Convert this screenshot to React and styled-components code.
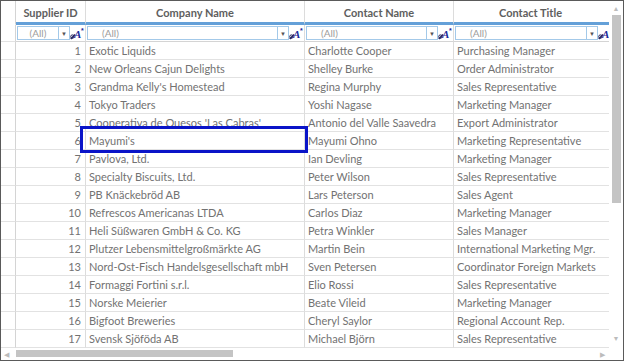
import React from 'react';
import styled, { createGlobalStyle } from 'styled-components';

const GlobalStyle = createGlobalStyle`
  body {
    margin: 0;
    background: #fff;
    font-family: Lato, "Open Sans", sans-serif;
  }
`;

const COLS = '15px 70px 219px 149px 160px';

const rows = [
  [1, 'Exotic Liquids', 'Charlotte Cooper', 'Purchasing Manager'],
  [2, 'New Orleans Cajun Delights', 'Shelley Burke', 'Order Administrator'],
  [3, "Grandma Kelly's Homestead", 'Regina Murphy', 'Sales Representative'],
  [4, 'Tokyo Traders', 'Yoshi Nagase', 'Marketing Manager'],
  [5, "Cooperativa de Quesos 'Las Cabras'", 'Antonio del Valle Saavedra', 'Export Administrator'],
  [6, "Mayumi's", 'Mayumi Ohno', 'Marketing Representative'],
  [7, 'Pavlova, Ltd.', 'Ian Devling', 'Marketing Manager'],
  [8, 'Specialty Biscuits, Ltd.', 'Peter Wilson', 'Sales Representative'],
  [9, 'PB Knäckebröd AB', 'Lars Peterson', 'Sales Agent'],
  [10, 'Refrescos Americanas LTDA', 'Carlos Diaz', 'Marketing Manager'],
  [11, 'Heli Süßwaren GmbH & Co. KG', 'Petra Winkler', 'Sales Manager'],
  [12, 'Plutzer Lebensmittelgroßmärkte AG', 'Martin Bein', 'International Marketing Mgr.'],
  [13, 'Nord-Ost-Fisch Handelsgesellschaft mbH', 'Sven Petersen', 'Coordinator Foreign Markets'],
  [14, 'Formaggi Fortini s.r.l.', 'Elio Rossi', 'Sales Representative'],
  [15, 'Norske Meierier', 'Beate Vileid', 'Marketing Manager'],
  [16, 'Bigfoot Breweries', 'Cheryl Saylor', 'Regional Account Rep.'],
  [17, 'Svensk Sjöföda AB', 'Michael Björn', 'Sales Representative'],
];

const Frame = styled.div`
  width: 624px;
  height: 361px;
  box-sizing: border-box;
  border: 1px solid #5a5a5a;
  display: grid;
  grid-template-columns: 1fr 14px;
  grid-template-rows: 1fr 12px;
  overflow: hidden;
  background: #fff;
`;

const GridArea = styled.div`
  position: relative;
  overflow: hidden;
`;

const Row = styled.div`
  display: grid;
  grid-template-columns: ${COLS};
  height: ${p => p.h}px;
  box-sizing: border-box;
`;

const HeaderCell = styled.div`
  box-sizing: border-box;
  border-right: 1px solid #dcdcdc;
  border-bottom: 3px solid #64a0d8;
  display: flex;
  align-items: center;
  justify-content: center;
  padding-top: 2px;
  font-family: Lato, sans-serif;
  font-weight: 700;
  font-size: 11px;
  color: #5e5e5e;
  white-space: nowrap;
  overflow: hidden;
`;

const Indicator = styled.div`
  box-sizing: border-box;
  border-right: 1px solid #d4d4d4;
  border-bottom: 1px solid ${p => (p.plain ? 'transparent' : '#e2e2e2')};
`;

const FilterCell = styled.div`
  box-sizing: border-box;
  border-right: 1px solid #dcdcdc;
  border-bottom: 1px solid #d4d4d4;
  display: flex;
  align-items: stretch;
  padding: 1px 0 1px 1px;
  overflow: hidden;
`;

const FilterInput = styled.div`
  flex: 1;
  display: flex;
  align-items: center;
  justify-content: ${p => (p.center ? 'center' : 'flex-start')};
  padding-left: ${p => (p.center ? 0 : 14)}px;
  border: 1px solid #a3c9e9;
  border-right: none;
  font-size: 10px;
  color: #9c9c9c;
  white-space: nowrap;
`;

const DropButton = styled.div`
  width: 10px;
  flex: none;
  border: 1px solid #a3c9e9;
  display: flex;
  align-items: center;
  justify-content: center;
  color: #555;
  font-size: 6px;
`;

const OperatorIcon = styled.div`
  width: 15px;
  flex: none;
  display: flex;
  align-items: center;
  justify-content: center;
`;

const Cell = styled.div`
  box-sizing: border-box;
  border-right: 1px solid #dcdcdc;
  border-bottom: 1px solid #e2e2e2;
  display: flex;
  align-items: center;
  justify-content: ${p => (p.num ? 'flex-end' : 'flex-start')};
  padding: ${p => (p.num ? '0 4px 0 0' : '0 0 0 3px')};
  font-size: 11px;
  color: #727272;
  white-space: nowrap;
  overflow: hidden;
`;

const EditBox = styled.div`
  position: absolute;
  left: 79px;
  top: 125px;
  width: 228px;
  height: 27px;
  box-sizing: border-box;
  border: 3px solid #0a14c8;
  pointer-events: none;
`;

const VScroll = styled.div`
  display: flex;
  flex-direction: column;
  align-items: center;
  padding: 3px 0 6px;
  box-sizing: border-box;
`;

const HScroll = styled.div`
  display: flex;
  align-items: center;
  padding: 0 4px 0 3px;
  grid-column: 1 / 2;
`;

const Corner = styled.div``;

const Arrow = styled.div`
  color: #bcbcbc;
  font-size: 7px;
  line-height: 8px;
  flex: none;
`;

const VThumb = styled.div`
  width: 9px;
  height: 188px;
  margin-top: 3px;
  background: #c4c4c4;
`;

const Spacer = styled.div`
  flex: 1;
`;

const HThumb = styled.div`
  width: 217px;
  height: 7px;
  margin-left: 7px;
  margin-top: -2px;
  background: #c4c4c4;
`;

const Wand = () => (
  <svg width="15" height="13" viewBox="0 0 15 13">
    <line x1="0.8" y1="12" x2="5" y2="7.5" stroke="#262660" strokeWidth="1.7" />
    <circle cx="2.4" cy="9.6" r="1.7" fill="none" stroke="#262660" strokeWidth="1" />
    <text x="4" y="11" fontFamily="Liberation Serif, serif" fontStyle="italic" fontWeight="700" fontSize="11" fill="#1c2a9a">A</text>
    <text x="11" y="6" fontFamily="Liberation Sans, sans-serif" fontWeight="700" fontSize="7" fill="#1c2a9a">*</text>
  </svg>
);

const Filter = ({ center }) => (
  <FilterCell>
    <FilterInput center={center}>(All)</FilterInput>
    <DropButton>▼</DropButton>
    <OperatorIcon><Wand /></OperatorIcon>
  </FilterCell>
);

export default function App() {
  return (
    <>
      <GlobalStyle />
      <Frame>
        <GridArea>
          <Row h={24}>
            <Indicator plain />
            <HeaderCell>Supplier ID</HeaderCell>
            <HeaderCell>Company Name</HeaderCell>
            <HeaderCell>Contact Name</HeaderCell>
            <HeaderCell style={{ paddingRight: 6 }}>Contact Title</HeaderCell>
          </Row>
          <Row h={17}>
            <Indicator />
            <Filter center />
            <Filter />
            <Filter />
            <Filter />
          </Row>
          {rows.map(([id, company, contact, title]) => (
            <Row h={18} key={id}>
              <Indicator />
              <Cell num>{id}</Cell>
              <Cell>{company}</Cell>
              <Cell>{contact}</Cell>
              <Cell>{title}</Cell>
            </Row>
          ))}
          <EditBox />
        </GridArea>
        <VScroll>
          <Arrow>▲</Arrow>
          <VThumb />
          <Spacer />
          <Arrow>▼</Arrow>
        </VScroll>
        <HScroll>
          <Arrow>◀</Arrow>
          <HThumb />
          <Spacer />
          <Arrow>▶</Arrow>
        </HScroll>
        <Corner />
      </Frame>
    </>
  );
}
